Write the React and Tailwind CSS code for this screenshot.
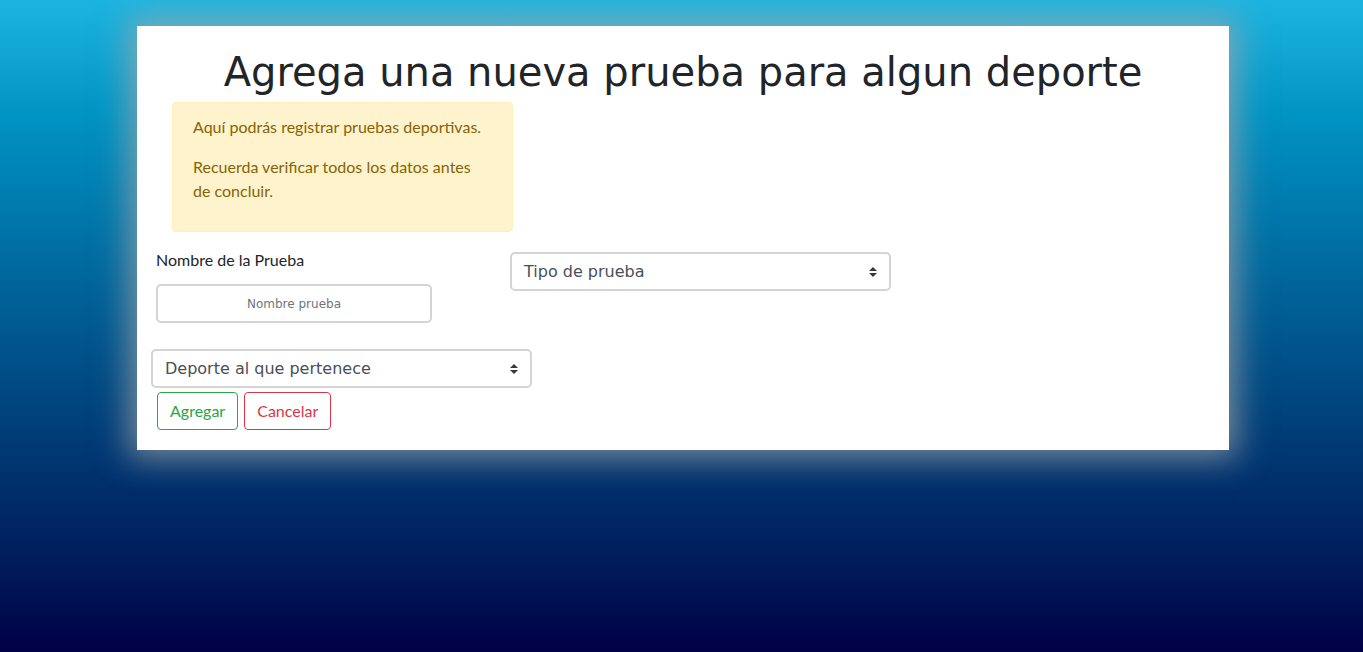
import { useState } from 'react'

const BODY = { fontFamily: '"Segoe UI", Lato, "Liberation Sans", sans-serif' }
const DEJAVU = { fontFamily: '"DejaVu Sans", Verdana, sans-serif' }

function Arrows() {
  return (
    <svg width="8" height="10" viewBox="0 0 8 10" className="shrink-0">
      <path d="M4 0 L8 4 H0 Z M4 10 L0 6 H8 Z" fill="#343a40" />
    </svg>
  )
}

function Select({ label, className = '' }) {
  return (
    <div
      className={`flex h-[39px] w-[381px] items-center justify-between rounded-[5px] border-2 border-[#d4d4d6] bg-white px-[12px] text-[16px] text-[#495057] ${className}`}
      style={DEJAVU}
    >
      <span>{label}</span>
      <Arrows />
    </div>
  )
}

export default function App() {
  const [name, setName] = useState('')

  return (
    <div className="h-[652px] w-full overflow-hidden bg-gradient-to-b from-[#1cb5e0] to-[#000046] pt-[26px]">
      <div
        className="ml-[137px] flex w-[1092px] flex-col bg-white pb-[20px] pt-[22px] shadow-[0_0_30px_8px_rgba(170,170,170,0.7)]"
        style={BODY}
      >
        <h1 className="mb-[6px] text-center text-[40px] leading-[1.2] text-[#212529]" style={DEJAVU}>
          Agrega una nueva prueba para algun deporte
        </h1>

        <div className="ml-[35px] w-[341px] rounded-[4px] border border-[#ffeeba] bg-[#fff3cd] px-[20px] py-[12px] text-[16px] leading-[24px] text-[#856404]">
          <p className="mb-[16px]">Aquí podrás registrar pruebas deportivas.</p>
          <p className="mb-[16px]">Recuerda verificar todos los datos antes de concluir.</p>
        </div>

        <div className="mt-[16px] flex items-start">
          <div className="ml-[19px] flex w-[276px] flex-col">
            <label className="text-[16px] leading-[24px] text-[#212529]">Nombre de la Prueba</label>
            <input
              value={name}
              onChange={(e) => setName(e.target.value)}
              placeholder="Nombre prueba"
              style={DEJAVU}
              className="mt-[12px] h-[39px] w-[276px] rounded-[5px] border-2 border-[#d4d4d6] bg-white text-center text-[12px] text-[#495057] outline-none placeholder:text-[#6c757d]"
            />
          </div>
          <Select label="Tipo de prueba" className="ml-[78px] mt-[4px]" />
        </div>

        <Select label="Deporte al que pertenece" className="ml-[14px] mt-[26px]" />

        <div className="ml-[20px] mt-[4px] flex gap-[6px]">
          <button className="h-[38px] rounded-[4px] border border-[#28a745] px-[12px] text-[16px] text-[#28a745]">
            Agregar
          </button>
          <button className="h-[38px] rounded-[4px] border border-[#dc3545] px-[12px] text-[16px] text-[#dc3545]">
            Cancelar
          </button>
        </div>
      </div>
    </div>
  )
}
